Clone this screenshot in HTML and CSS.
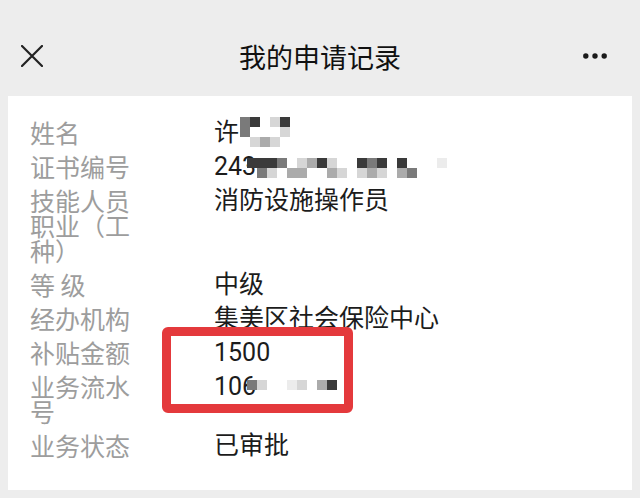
FILE: index.html
```html
<!DOCTYPE html>
<html lang="zh-CN">
<head>
<meta charset="utf-8">
<title>我的申请记录</title>
<link rel="stylesheet" href="styles.css">
</head>
<body>
<header class="topbar">
  <span class="close" aria-label="关闭">
    <svg width="22" height="22" viewBox="0 0 22 22"><path d="M1 1 L21 21 M21 1 L1 21" stroke="#222" stroke-width="2.2" stroke-linecap="round" fill="none"/></svg>
  </span>
  <h1 class="title">我的申请记录</h1>
  <span class="more" aria-label="更多">
    <svg width="24" height="6" viewBox="0 0 24 6"><circle cx="2.8" cy="3" r="2.7" fill="#1a1a1a"/><circle cx="12" cy="3" r="2.7" fill="#1a1a1a"/><circle cx="21.2" cy="3" r="2.7" fill="#1a1a1a"/></svg>
  </span>
</header>

<main class="card">
  <dl class="info">
    <dt>姓名</dt>
    <dd>许<span class="mosaic mosaic-name">
      <i class="b"></i><i class="a"></i><i></i><i class="d"></i><i class="a"></i>
      <i class="b"></i><i></i><i></i><i></i><i class="d"></i>
      <i></i><i class="d"></i><i class="c"></i><i class="d"></i><i></i>
    </span></dd>

    <dt>证书编号</dt>
    <dd>243<span class="mosaic mosaic-cert">
      <i class="a"></i><i class="a"></i><i class="a"></i><i class="b"></i><i></i><i class="d"></i><i class="c"></i><i class="a"></i><i class="d"></i><i></i><i></i><i class="a"></i><i class="b"></i><i class="a"></i><i></i><i class="a"></i><i></i><i></i><i></i><i class="e"></i>
      <i></i><i class="b"></i><i class="d"></i><i></i><i class="c"></i><i class="c"></i><i></i><i></i><i class="c"></i><i class="d"></i><i></i><i class="d"></i><i class="c"></i><i class="d"></i><i></i><i class="c"></i><i class="b"></i><i></i><i></i><i></i>
    </span></dd>

    <dt>技能人员职业（工种）</dt>
    <dd>消防设施操作员</dd>

    <dt>等 级</dt>
    <dd>中级</dd>

    <dt>经办机构</dt>
    <dd>集美区社会保险中心</dd>

    <dt>补贴金额</dt>
    <dd>1500</dd>

    <dt>业务流水号</dt>
    <dd>106<span class="mosaic mosaic-serial">
      <i class="b"></i><i class="d"></i><i></i><i></i><i class="e"></i><i class="d"></i><i></i><i class="c"></i><i class="a"></i>
    </span></dd>

    <dt>业务状态</dt>
    <dd>已审批</dd>
  </dl>
  <div class="highlight" aria-hidden="true"></div>
</main>
</body>
</html>
```

FILE: styles.css
```css
* { box-sizing: border-box; }

html, body {
  margin: 0;
  padding: 0;
}

body {
  width: 640px;
  height: 498px;
  background: #ededed;
  font-family: "Noto Sans CJK SC", "Noto Sans", sans-serif;
  overflow: hidden;
}

.topbar {
  height: 96px;
  padding: 20px 21px 0 21px;
  display: grid;
  grid-template-columns: 1fr auto 1fr;
  align-items: center;
}

.close {
  justify-self: start;
  display: flex;
  margin-top: -4px;
}

.more {
  justify-self: end;
  display: flex;
  margin-top: -4px;
  margin-right: 12px;
}

.title {
  margin: 0;
  font-size: 27px;
  font-weight: 400;
  color: #111;
  line-height: 36px;
  margin-top: -3px;
}

.card {
  position: relative;
  margin: 0 8px;
  height: 394px;
  background: #fff;
  padding: 24px 22px 32px;
}

.info {
  margin: 0;
  display: grid;
  grid-template-columns: 100px 1fr;
  column-gap: 84px;
  row-gap: 9px;
  font-size: 25px;
  line-height: 25px;
}

.info dt {
  color: #9d9d9d;
}

.info dd {
  margin: 0;
  color: #1c1c1c;
  font-family: "Roboto", "Noto Sans CJK SC", sans-serif;
  white-space: nowrap;
}

.mosaic {
  display: inline-grid;
  grid-auto-rows: 10px;
  vertical-align: top;
}

.mosaic i {
  display: block;
  width: 10px;
  height: 10px;
}

.mosaic .a { background: #3a3a3a; }
.mosaic .b { background: #7a7a7a; }
.mosaic .c { background: #ababab; }
.mosaic .d { background: #d6d6d6; }
.mosaic .e { background: #ececec; }

.mosaic-name {
  grid-template-columns: repeat(5, 10px);
  margin: -3px 0 -2px 1px;
}

.mosaic-cert {
  grid-template-columns: repeat(20, 10px);
  margin: 4px 0 0 -9px;
}

.mosaic-serial {
  grid-template-columns: repeat(9, 10px);
  margin: 6px 0 0 -9px;
}

.highlight {
  position: absolute;
  left: 154px;
  top: 231px;
  width: 191px;
  height: 86px;
  border: 9px solid #e4393c;
  border-radius: 6px;
}
```
